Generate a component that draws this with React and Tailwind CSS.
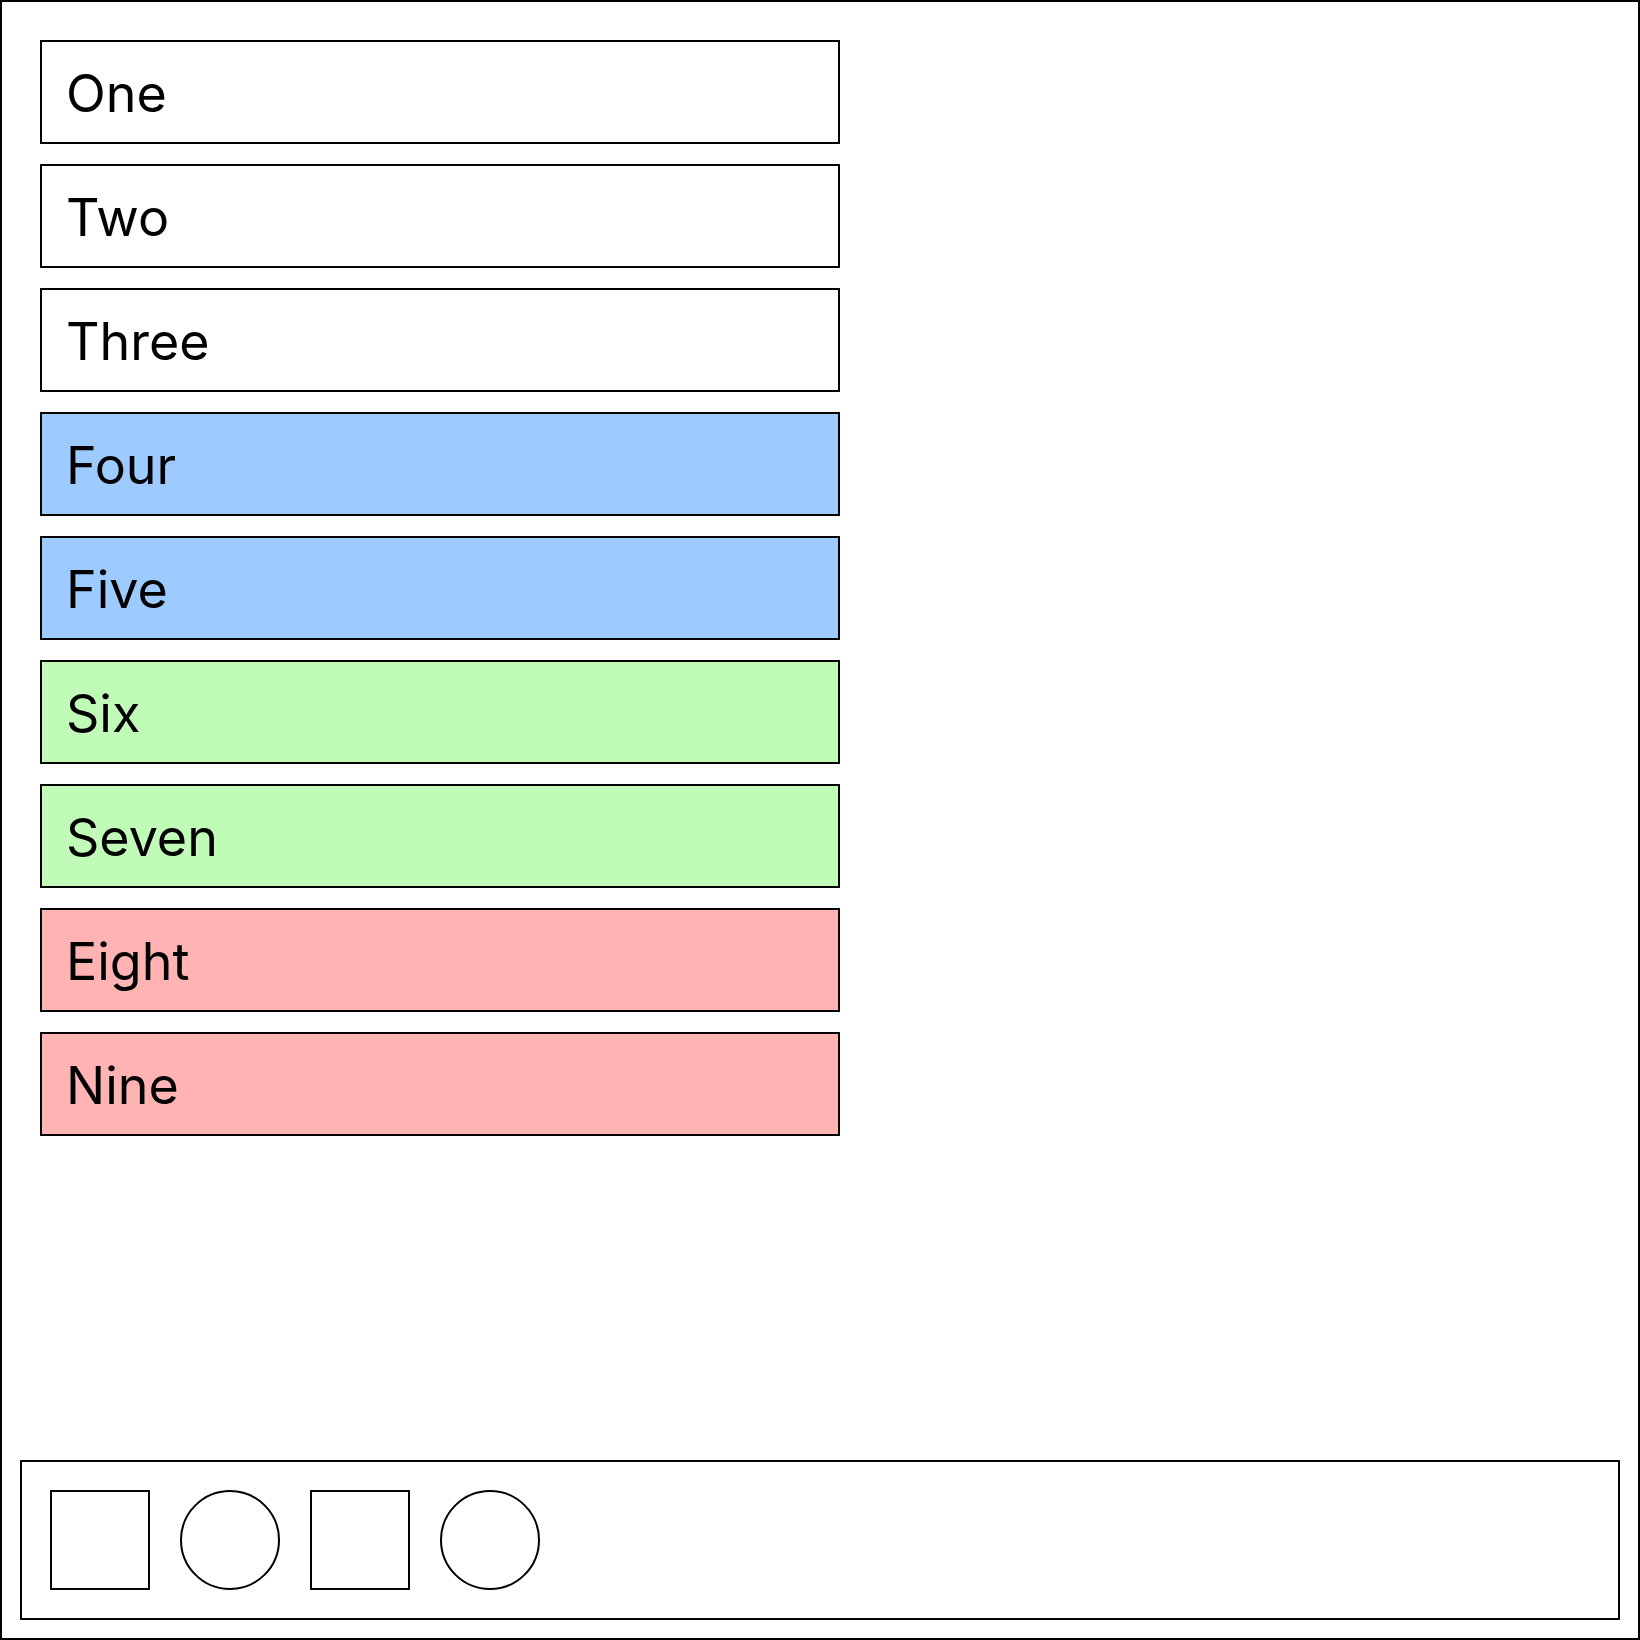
const items = [
  { label: 'One', bg: 'bg-white' },
  { label: 'Two', bg: 'bg-white' },
  { label: 'Three', bg: 'bg-white' },
  { label: 'Four', bg: 'bg-[#9ecbff]' },
  { label: 'Five', bg: 'bg-[#9ecbff]' },
  { label: 'Six', bg: 'bg-[#c1fbb8]' },
  { label: 'Seven', bg: 'bg-[#c1fbb8]' },
  { label: 'Eight', bg: 'bg-[#ffb3b3]' },
  { label: 'Nine', bg: 'bg-[#ffb3b3]' },
];

export default function App() {
  return (
    <div
      className="w-[1640px] h-[1640px] border-2 border-black bg-white flex flex-col text-black"
      style={{ fontFamily: 'Inter, "Noto Sans", sans-serif' }}
    >
      <div className="flex flex-col gap-5 pt-[38px] pl-[38px]">
        {items.map((item) => (
          <div
            key={item.label}
            className={`w-[800px] h-[104px] border-2 border-black flex items-center pl-6 pt-[3px] text-[52px] leading-none ${item.bg}`}
          >
            {item.label}
          </div>
        ))}
      </div>

      <div className="mt-auto m-[18px] h-[160px] border-2 border-black p-[28px] flex gap-[30px]">
        <div className="w-[100px] h-[100px] border-2 border-black" />
        <div className="w-[100px] h-[100px] border-2 border-black rounded-full" />
        <div className="w-[100px] h-[100px] border-2 border-black" />
        <div className="w-[100px] h-[100px] border-2 border-black rounded-full" />
      </div>
    </div>
  );
}
